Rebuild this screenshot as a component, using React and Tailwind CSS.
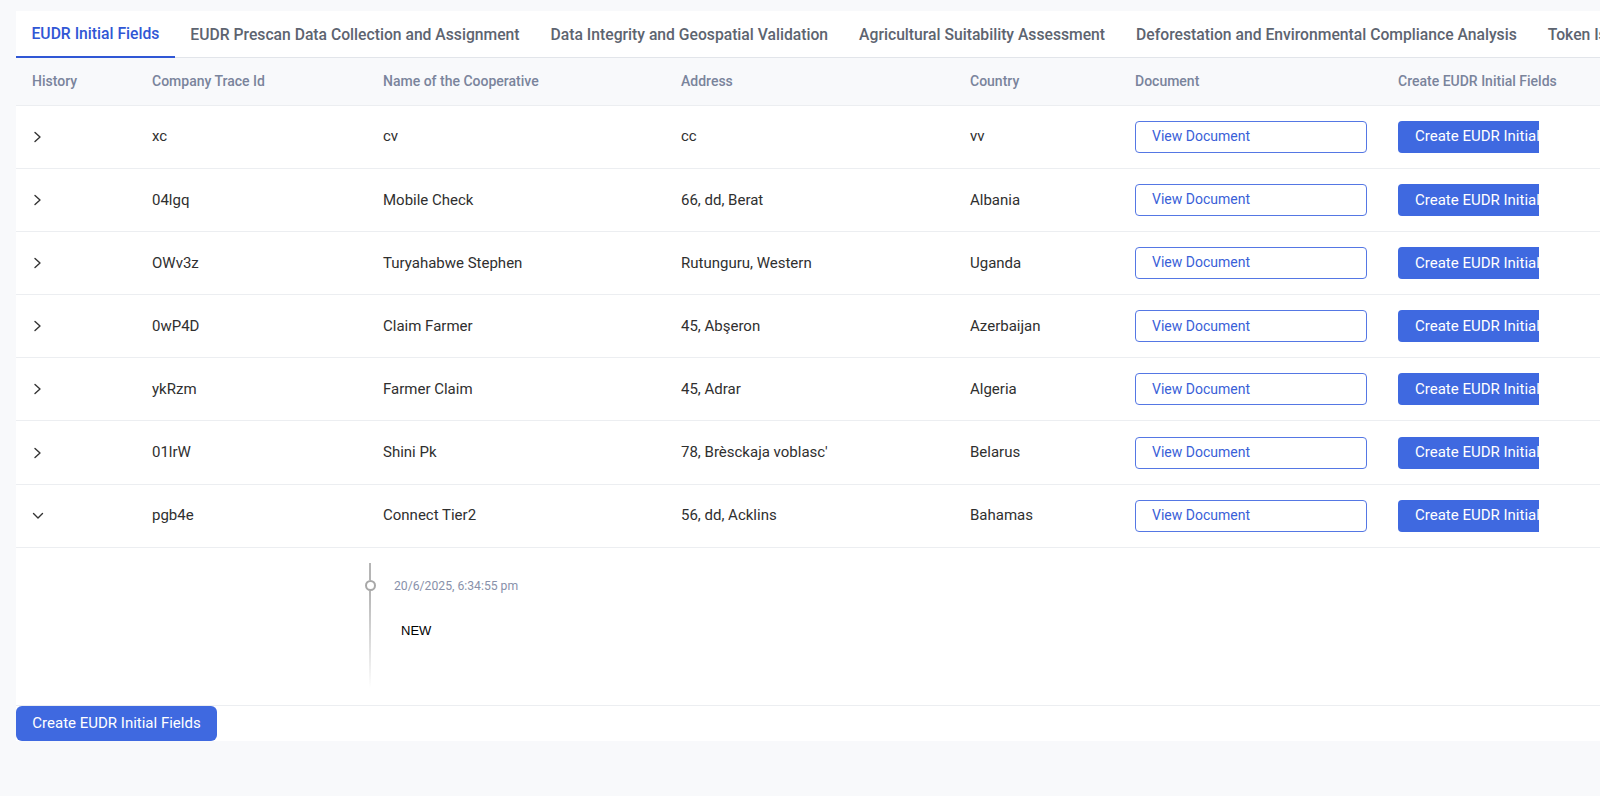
import React from 'react';

const tabs = [
  'EUDR Initial Fields',
  'EUDR Prescan Data Collection and Assignment',
  'Data Integrity and Geospatial Validation',
  'Agricultural Suitability Assessment',
  'Deforestation and Environmental Compliance Analysis',
  'Token Issuance',
];

const columns = [
  { label: 'History', w: 'w-[120px]' },
  { label: 'Company Trace Id', w: 'w-[231px]' },
  { label: 'Name of the Cooperative', w: 'w-[298px]' },
  { label: 'Address', w: 'w-[289px]' },
  { label: 'Country', w: 'w-[165px]' },
  { label: 'Document', w: 'w-[263px]' },
  { label: 'Create EUDR Initial Fields', w: 'w-[218px]' },
];

const rows = [
  { id: 'xc', name: 'cv', address: 'cc', country: 'vv' },
  { id: '04lgq', name: 'Mobile Check', address: '66, dd, Berat', country: 'Albania' },
  { id: 'OWv3z', name: 'Turyahabwe Stephen', address: 'Rutunguru, Western', country: 'Uganda' },
  { id: '0wP4D', name: 'Claim Farmer', address: '45, Abşeron', country: 'Azerbaijan' },
  { id: 'ykRzm', name: 'Farmer Claim', address: '45, Adrar', country: 'Algeria' },
  { id: '01lrW', name: 'Shini Pk', address: "78, Brèsckaja voblasc'", country: 'Belarus' },
  { id: 'pgb4e', name: 'Connect Tier2', address: '56, dd, Acklins', country: 'Bahamas', open: true },
];

function Chevron({ open }) {
  if (open) {
    return (
      <svg width="12" height="10" viewBox="0 0 12 10" fill="none" stroke="#333" strokeWidth="1.4" strokeLinecap="round" strokeLinejoin="round">
        <polyline points="1.5,2.5 6,7 10.5,2.5" />
      </svg>
    );
  }
  return (
    <svg width="10" height="12" viewBox="0 0 10 12" fill="none" stroke="#333" strokeWidth="1.4" strokeLinecap="round" strokeLinejoin="round">
      <polyline points="2,1.5 7,6 2,10.5" />
    </svg>
  );
}

function HistoryRow() {
  return (
    <tr className="border-b border-[#eceef1]">
      <td colSpan={7} className="p-0">
        <div className="flex pl-[348px] pt-[15px] pb-[17px]">
          <div className="flex w-[12px] h-[125px] flex-col items-center">
            <div className="h-[17px] w-[2px] bg-[#b5b5b5]" />
            <div className="h-[11px] w-[11px] shrink-0 rounded-full border-2 border-[#a8a8a8] bg-white" />
            <div className="w-[2px] flex-1 bg-gradient-to-b from-[#b5b5b5] to-white" />
          </div>
          <div className="pl-[18px] pt-[16px]">
            <div className="text-[12.2px] leading-[14px] text-[#8891aa] font-['Roboto',sans-serif]">20/6/2025, 6:34:55 pm</div>
            <div className="mt-[30px] pl-[7px] text-[13px] leading-[16px] text-black font-['Liberation_Sans',Arial,sans-serif]">NEW</div>
          </div>
        </div>
      </td>
    </tr>
  );
}

export default function App() {
  return (
    <div className="min-h-[796px] bg-[#f8f9fb] pt-[11px] pl-4 font-['Roboto',sans-serif] overflow-hidden">
      <div className="bg-white w-[1600px]">
        <div className="flex h-[47px] border-b border-[#e2e5ea] whitespace-nowrap">
          {tabs.map((t, i) => (
            <div
              key={t}
              className={
                i === 0
                  ? 'px-[15.5px] flex items-center text-[15.7px] font-medium text-[#3057d5] border-b-2 border-[#3057d5] -mb-px pt-px'
                  : 'px-[15.5px] flex items-center text-[15.7px] font-medium text-[#5d6470] pt-px'
              }
            >
              {t}
            </div>
          ))}
        </div>
        <table className="table-fixed border-collapse text-left">
          <thead>
            <tr className="h-[47px] bg-[#f8f9fb] border-b border-[#eceef1]">
              {columns.map((c) => (
                <th key={c.label} className={`${c.w} pl-4 text-[14px] font-medium text-[#7a849c] whitespace-nowrap`}>
                  {c.label}
                </th>
              ))}
            </tr>
          </thead>
          <tbody>
            {rows.map((r) => (
              <React.Fragment key={r.id}>
                <tr className="h-[63.2px] border-b border-[#eceef1] text-[15px] text-[#2f2f2f]">
                  <td className="pl-4">
                    <div className={r.open ? 'flex items-center' : 'flex items-center pl-[1px]'}>
                      <Chevron open={r.open} />
                    </div>
                  </td>
                  <td className="pl-4">{r.id}</td>
                  <td className="pl-4">{r.name}</td>
                  <td className="pl-4">{r.address}</td>
                  <td className="pl-4">{r.country}</td>
                  <td className="pl-4">
                    <button className="h-[32px] w-[232px] rounded-[4px] border border-[#5577e4] bg-white pl-4 text-left text-[14px] text-[#3a5fd8]">
                      View Document
                    </button>
                  </td>
                  <td className="pl-4">
                    <div className="w-[141px] overflow-hidden rounded-l-[4px]">
                      <button className="h-[32px] whitespace-nowrap bg-[#3f69e0] pl-[17px] pr-4 text-[15px] text-white">
                        Create EUDR Initial Fields
                      </button>
                    </div>
                  </td>
                </tr>
                {r.open && <HistoryRow />}
              </React.Fragment>
            ))}
          </tbody>
        </table>
        <button className="h-[35px] w-[201px] rounded-[6px] bg-[#3f69e0] text-[15px] text-white">
          Create EUDR Initial Fields
        </button>
      </div>
    </div>
  );
}
